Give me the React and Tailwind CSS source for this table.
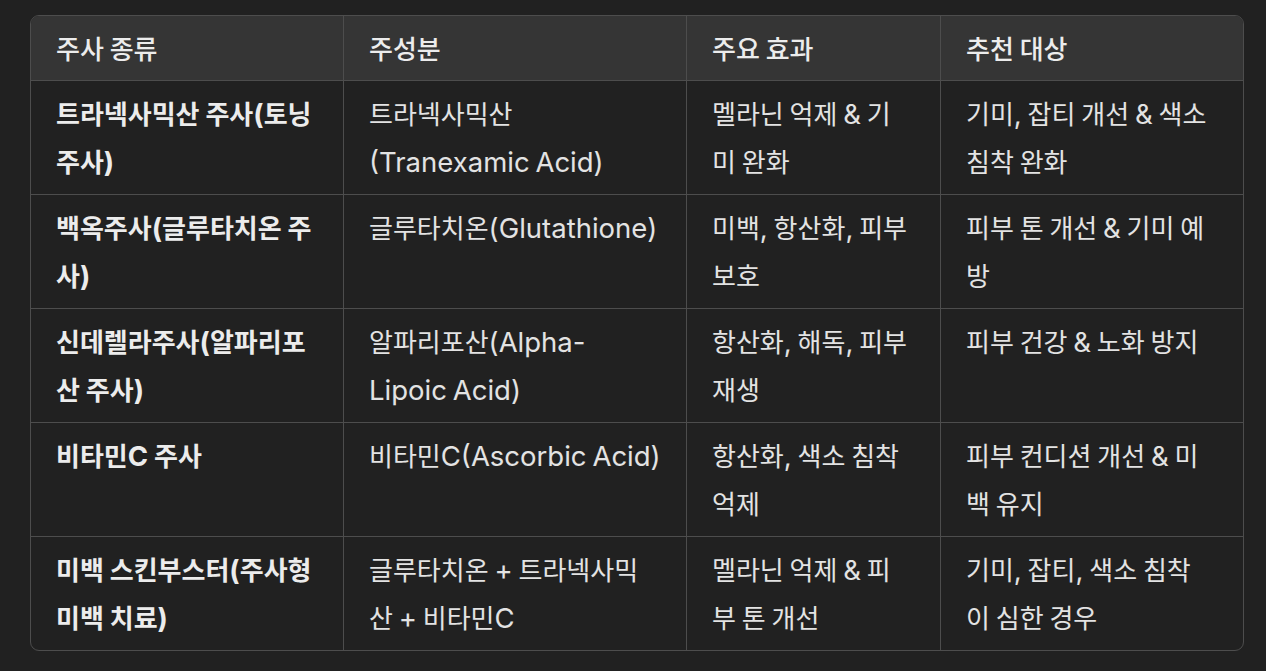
import React from 'react';

const headers = ['주사 종류', '주성분', '주요 효과', '추천 대상'];

// each cell is a list of lines, broken as in the reference
const rows = [
    [
        ['트라넥사믹산 주사(토닝', '주사)'],
        ['트라넥사믹산', '(Tranexamic Acid)'],
        ['멜라닌 억제 & 기', '미 완화'],
        ['기미, 잡티 개선 & 색소', '침착 완화'],
    ],
    [
        ['백옥주사(글루타치온 주', '사)'],
        ['글루타치온(Glutathione)'],
        ['미백, 항산화, 피부', '보호'],
        ['피부 톤 개선 & 기미 예', '방'],
    ],
    [
        ['신데렐라주사(알파리포', '산 주사)'],
        ['알파리포산(Alpha-', 'Lipoic Acid)'],
        ['항산화, 해독, 피부', '재생'],
        ['피부 건강 & 노화 방지'],
    ],
    [
        ['비타민C 주사'],
        ['비타민C(Ascorbic Acid)'],
        ['항산화, 색소 침착', '억제'],
        ['피부 컨디션 개선 & 미', '백 유지'],
    ],
    [
        ['미백 스킨부스터(주사형', '미백 치료)'],
        ['글루타치온 + 트라넥사믹', '산 + 비타민C'],
        ['멜라닌 억제 & 피', '부 톤 개선'],
        ['기미, 잡티, 색소 침착', '이 심한 경우'],
    ],
];

const colWidths = ['w-[313px]', 'w-[343px]', 'w-[254px]', 'w-[302px]'];

// hangul runs stay in Noto, latin runs get a slightly larger Inter
const Line = ({ text }) => {
    const parts = text.match(/[\uAC00-\uD7AF\s]+|[^\uAC00-\uD7AF\s]+/g) || [];
    return (
        <div className="h-[48px] whitespace-nowrap">
            {parts.map((p, i) =>
                /[\uAC00-\uD7AF]|^\s+$/.test(p) ? (
                    <span key={i}>{p}</span>
                ) : (
                    <span key={i} className="font-['Inter',sans-serif] text-[27.5px]">{p}</span>
                )
            )}
        </div>
    );
};

export default function App() {
    return (
        <div className="min-h-screen w-full bg-[#212121] pt-[15px] pl-[30px] font-['Noto_Sans_CJK_KR','Noto_Sans',sans-serif] text-[26px] leading-[48px] text-[#ececec]">
            <div className="w-[1214px] rounded-[9px] border border-[#4d4d4d] overflow-hidden">
                <div className="flex bg-[#353535] border-b border-[#4d4d4d]">
                    {headers.map((h, i) => (
                        <div
                            key={h}
                            className={`${colWidths[i]} shrink-0 px-[25px] py-2 font-medium ${i < 3 ? 'border-r border-[#4d4d4d]' : ''}`}
                        >
                            <Line text={h} />
                        </div>
                    ))}
                </div>
                {rows.map((row, r) => (
                    <div key={r} className={`flex ${r < rows.length - 1 ? 'border-b border-[#4d4d4d]' : ''}`}>
                        {row.map((cell, i) => (
                            <div
                                key={i}
                                className={`${colWidths[i]} shrink-0 px-[25px] pt-2 pb-[9px] ${i === 0 ? 'font-bold' : 'font-normal text-[#e3e3e3]'} ${i < 3 ? 'border-r border-[#4d4d4d]' : ''}`}
                            >
                                {cell.map((line, j) => (
                                    <Line key={j} text={line} />
                                ))}
                            </div>
                        ))}
                    </div>
                ))}
            </div>
        </div>
    );
}
